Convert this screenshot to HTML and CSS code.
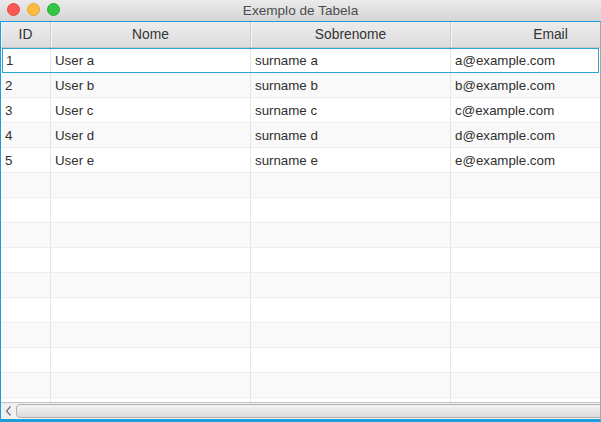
FILE: index.html
```html
<!DOCTYPE html>
<html>
<head>
<meta charset="utf-8">
<link rel="stylesheet" href="styles.css">
</head>
<body>
<div class="window">
  <div class="titlebar">
    <div class="lights">
      <span class="light red"></span>
      <span class="light yellow"></span>
      <span class="light green"></span>
    </div>
    <div class="title">Exemplo de Tabela</div>
  </div>
  <div class="table">
    <div class="header">
      <div class="hcell c-id">ID</div>
      <div class="hcell c-w">Nome</div>
      <div class="hcell c-w">Sobrenome</div>
      <div class="hcell c-w">Email</div>
    </div>
    <div class="body">
      <div class="row focused"><div class="cell c-id">1</div><div class="cell c-w">User a</div><div class="cell c-w">surname a</div><div class="cell c-w">a@example.com</div></div>
      <div class="row"><div class="cell c-id">2</div><div class="cell c-w">User b</div><div class="cell c-w">surname b</div><div class="cell c-w">b@example.com</div></div>
      <div class="row"><div class="cell c-id">3</div><div class="cell c-w">User c</div><div class="cell c-w">surname c</div><div class="cell c-w">c@example.com</div></div>
      <div class="row"><div class="cell c-id">4</div><div class="cell c-w">User d</div><div class="cell c-w">surname d</div><div class="cell c-w">d@example.com</div></div>
      <div class="row"><div class="cell c-id">5</div><div class="cell c-w">User e</div><div class="cell c-w">surname e</div><div class="cell c-w">e@example.com</div></div>
      <div class="row"><div class="cell c-id"></div><div class="cell c-w"></div><div class="cell c-w"></div><div class="cell c-w"></div></div>
      <div class="row"><div class="cell c-id"></div><div class="cell c-w"></div><div class="cell c-w"></div><div class="cell c-w"></div></div>
      <div class="row"><div class="cell c-id"></div><div class="cell c-w"></div><div class="cell c-w"></div><div class="cell c-w"></div></div>
      <div class="row"><div class="cell c-id"></div><div class="cell c-w"></div><div class="cell c-w"></div><div class="cell c-w"></div></div>
      <div class="row"><div class="cell c-id"></div><div class="cell c-w"></div><div class="cell c-w"></div><div class="cell c-w"></div></div>
      <div class="row"><div class="cell c-id"></div><div class="cell c-w"></div><div class="cell c-w"></div><div class="cell c-w"></div></div>
      <div class="row"><div class="cell c-id"></div><div class="cell c-w"></div><div class="cell c-w"></div><div class="cell c-w"></div></div>
      <div class="row"><div class="cell c-id"></div><div class="cell c-w"></div><div class="cell c-w"></div><div class="cell c-w"></div></div>
      <div class="row"><div class="cell c-id"></div><div class="cell c-w"></div><div class="cell c-w"></div><div class="cell c-w"></div></div>
      <div class="row"><div class="cell c-id"></div><div class="cell c-w"></div><div class="cell c-w"></div><div class="cell c-w"></div></div>
    </div>
    <div class="hscroll">
      <svg class="arrow" width="12" height="14" viewBox="0 0 12 14"><path d="M7.5 2.5 L3.5 7 L7.5 11.5" fill="none" stroke="#6e6e6e" stroke-width="1.2"/></svg>
      <div class="thumb"></div>
    </div>
  </div>
</div>
</body>
</html>
```

FILE: styles.css
```css
* { box-sizing: border-box; }
html, body { margin: 0; padding: 0; }
body {
  width: 601px;
  height: 422px;
  overflow: hidden;
  font-family: "Liberation Sans", Arial, sans-serif;
  font-size: 13.3px;
  color: #2f2f2f;
  background: #ececec;
}
.window {
  width: 601px;
  height: 422px;
  display: flex;
  flex-direction: column;
}
.titlebar {
  height: 21px;
  flex: none;
  position: relative;
  background: linear-gradient(#ebebeb, #d5d5d5);
  display: flex;
  align-items: center;
  justify-content: center;
}
.lights {
  position: absolute;
  left: 7px;
  top: 3px;
  display: flex;
  gap: 7px;
}
.light {
  width: 13px;
  height: 13px;
  border-radius: 50%;
}
.red { background: #fc5753; border: 1px solid #e24a46; }
.yellow { background: #fdbc40; border: 1px solid #e0a236; }
.green { background: #33c748; border: 1px solid #28ac36; }
.title {
  font-size: 13.6px;
  color: #4d4d4d;
  margin-top: -1px;
}
.table {
  flex: 1;
  display: flex;
  flex-direction: column;
  border-top: 1px solid #1b9fd6;
  border-left: 1px solid #1b9fd6;
  border-bottom: 3px solid #1b9fd6;
  border-right: 1px solid #a6a6a6;
  background: #fff;
  overflow: hidden;
}
.header {
  height: 26px;
  flex: none;
  display: flex;
  background: linear-gradient(#ececec, #dddddd);
  border-bottom: 1px solid #c4c4c4;
}
.hcell {
  flex: none;
  display: flex;
  align-items: center;
  justify-content: center;
  border-right: 1px solid #cfcfcf;
  box-shadow: inset 1px 0 0 #f6f6f6;
  color: #333;
  font-size: 13.8px;
  padding-bottom: 1px;
}
.c-id { width: 50px; }
.c-w { width: 200px; }
.body {
  height: 354px;
  flex: none;
  overflow: hidden;
  display: flex;
  flex-direction: column;
}
.row {
  height: 25px;
  flex: none;
  display: flex;
  border-bottom: 1px solid #ededed;
  background: #fff;
}
.row:nth-child(even) { background: #f9f9f9; }
.row.focused {
  border: 1px solid #2aa3d5;
  margin-left: 1px;
  margin-right: 1px;
}
.row.focused .cell:first-child { width: 48px; padding-left: 3px; }
.cell {
  flex: none;
  display: flex;
  align-items: center;
  padding-left: 4px;
  border-right: 1px solid #e6e6e6;
  color: #2f2f2f;
}
.hscroll {
  height: 17px;
  flex: none;
  display: flex;
  align-items: center;
  border-top: 1px solid #c3c3c3;
  background: #f0f0f0;
  padding: 1px 0 1px 2px;
}
.arrow {
  flex: none;
  margin-right: 1px;
}
.thumb {
  flex: none;
  width: 620px;
  height: 14px;
  border: 1px solid #b0b0b0;
  border-radius: 4px;
  background: linear-gradient(#f4f4f4, #dcdcdc);
}
```
